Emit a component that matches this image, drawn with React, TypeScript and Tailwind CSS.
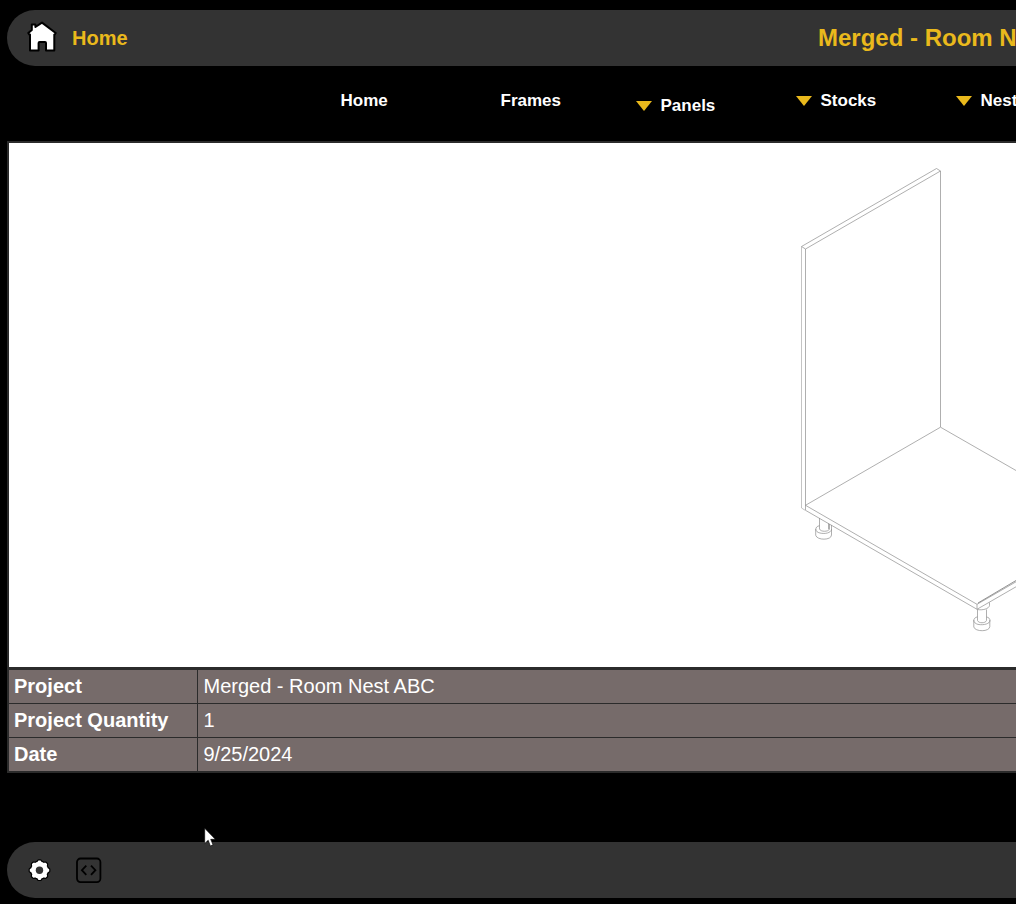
import type { ReactNode } from "react";

function Triangle() {
  return (
    <svg className="block shrink-0" width="16" height="10" viewBox="0 0 16 10">
      <path d="M0 0H16L8 10Z" fill="#eab91c" />
    </svg>
  );
}

function NavItem({ children, menu = false, low = false }: { children: ReactNode; menu?: boolean; low?: boolean }) {
  return (
    <div className={`flex shrink-0 items-center gap-[8.5px] ${low ? "pt-[5px]" : ""} ${menu ? "-ml-6 w-[184px]" : "w-40 pl-[0.5px]"}`}>
      {menu && <Triangle />}
      <span>{children}</span>
    </div>
  );
}

function HouseIcon() {
  return (
    <svg className="block shrink-0" width="30" height="32" viewBox="0 0 30 32">
      <path
        d="M4.8 9V3.4H8.4V6L15 1.6L28.7 12L27.6 13.7L27.3 13.5V29.4H19V22Q19 21 18 21H12.6Q11.6 21 11.6 22V29.4H3V13.5L2.4 13.7L1.3 12Z"
        fill="#fff"
        stroke="#000"
        strokeWidth="2"
        strokeLinejoin="round"
      />
    </svg>
  );
}

function GearTeeth() {
  return (
    <>
      <circle cx="12" cy="12" r="8.4" />
      <path d="M10 3.6L11 2.3H13L14 3.6V20.4L13 21.7H11L10 20.4ZM3.6 10L2.3 11V13L3.6 14H20.4L21.7 13V11L20.4 10Z" />
      <path d="M10 3.6L11 2.3H13L14 3.6V20.4L13 21.7H11L10 20.4ZM3.6 10L2.3 11V13L3.6 14H20.4L21.7 13V11L20.4 10Z" transform="rotate(45 12 12)" />
    </>
  );
}

function GearIcon() {
  return (
    <svg className="block shrink-0" width="25" height="24" viewBox="-.5 -.2 25 24">
      <g fill="#000" stroke="#000" strokeWidth="2.4" strokeLinejoin="round">
        <GearTeeth />
      </g>
      <g fill="#fff">
        <GearTeeth />
      </g>
      <circle cx="12" cy="12" r="3.7" fill="#333" />
    </svg>
  );
}

function CodeIcon() {
  return (
    <svg className="block shrink-0" width="26" height="26" viewBox="0 0 26 26" fill="none" stroke="#000" strokeWidth="1.8">
      <rect x="1" y="1.5" width="23.4" height="23.6" rx="3.5" />
      <path d="M10.3 8.6L5.9 13.2L10.3 17.8M15 8.6L19.4 13.2L15 17.8" />
    </svg>
  );
}

function Cabinet() {
  return (
    <svg className="block shrink-0" width="217" height="480" viewBox="799 160 217 480" fill="none" stroke="#8c8c8c" strokeWidth="0.7">
      <path d="M801.5 246.5L936.5 168.5L940.5 171L805.5 249Z" />
      <path d="M801.5 246.5V508L805.5 510.5" stroke="#aaa" />
      <path d="M805.5 249V510M940.5 171V427" />
      <path d="M1016 470.5L940.5 427.2L805.5 505.3L977 604.3L1016 581.8" />
      <path d="M805.5 510.3L977 609.3L1016 586.8M977 604.3V609.3" />
      <path d="M978 603L1016 580.5" stroke="#777" strokeWidth="0.8" />
      <path d="M819.5 518V529M828.5 523.5V529M819.5 529C820.5 532 828.5 532 829.5 529V524" />
      <path d="M819.5 525.7C814.5 526.5 814.5 532 820 533C825 534.3 831 532.8 831.5 529.5V525M815.7 529V535.3C817 540.5 831.5 540.5 831.5 535V529" />
      <path d="M977.5 609.5V620.5C978.5 623.5 985.5 623.5 986.5 620.5V609.5M977.5 609.5C982 610.5 989 609 989.5 605.5V602.5" />
      <path d="M977.5 616.8C972.5 618 972.5 623 978 624.4C984 625.5 990 623.6 990 620.5C990 618.5 988.5 617.4 986.5 617M973.8 620V627C975 632 989.8 632 989.8 626.5V620" />
    </svg>
  );
}

const rows = [
  ["Project", "Merged - Room Nest ABC"],
  ["Project Quantity", "1"],
  ["Date", "9/25/2024"],
];

export default function App() {
  return (
    <div className="relative flex h-[904px] w-[1016px] flex-col overflow-hidden bg-black pl-[7px] pt-[10px] font-['Liberation_Sans',Arial,sans-serif] text-white">
      <header className="flex h-14 shrink-0 items-center rounded-l-full bg-[#333] pl-5 font-bold text-[#eab91c]">
        <div className="flex w-[791px] shrink-0 items-center gap-[15px]">
          <div className="pb-[3px]">
            <HouseIcon />
          </div>
          <span className="text-xl">Home</span>
        </div>
        <span className="shrink-0 whitespace-nowrap text-2xl">Merged - Room Nest ABC</span>
      </header>

      <nav className="flex h-[75px] shrink-0 items-start overflow-hidden pl-[333px] pt-[23px] text-[17px] font-bold leading-6">
        <NavItem>Home</NavItem>
        <NavItem>Frames</NavItem>
        <NavItem menu low>Panels</NavItem>
        <NavItem menu>Stocks</NavItem>
        <NavItem menu>Nest</NavItem>
      </nav>

      <main className="h-[632px] shrink-0 border-y-2 border-l-2 border-[#2b2b2b]">
        <div className="flex h-[524px] justify-end bg-white pt-[17px]">
          <Cabinet />
        </div>
        <div className="border-t-[3px] border-[#2b2b2b] text-xl">
          {rows.map(([label, value]) => (
            <div key={label} className="flex h-[34px] border-b border-[#2b2b2b] bg-[#766b6a] leading-[33px] last:h-[33px] last:border-b-0">
              <div className="w-[189px] shrink-0 border-r border-[#2b2b2b] pl-[5px] font-bold">{label}</div>
              <div className="pl-[5.5px]">{value}</div>
            </div>
          ))}
        </div>
      </main>

      <footer className="mt-[69px] flex h-14 shrink-0 items-center gap-6 rounded-l-full bg-[#333] pl-5">
        <GearIcon />
        <CodeIcon />
      </footer>

      <svg className="absolute left-[204px] top-[828px]" width="13" height="20" viewBox="0 0 13 20">
        <path d="M.7 .3V15.5L4.2 12.2L6.4 18L9 16.8L6.7 11.3H11.3Z" fill="#fff" stroke="#000" strokeWidth=".6" />
      </svg>
    </div>
  );
}
